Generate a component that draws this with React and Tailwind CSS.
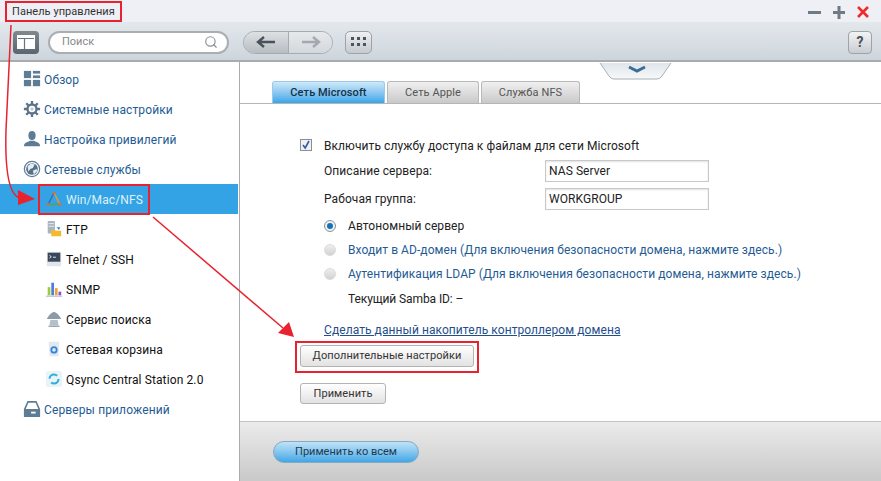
import React from "react";
import { Search } from "lucide-react";

const ic = "w-[18px] h-[18px] shrink-0";

const IconOverview = () => (
  <svg className={ic} viewBox="0 0 20 20"><g fill="#5f7c95"><rect x="1" y="1" width="8" height="8" /><rect x="11" y="1" width="8" height="3" /><rect x="11" y="6" width="8" height="3" /><rect x="1" y="11" width="8" height="7" /><rect x="11" y="11" width="8" height="7" /></g></svg>
);
const IconGear = () => (
  <svg className={ic} viewBox="0 0 20 20"><circle cx="10" cy="10" r="5" fill="none" stroke="#5d7388" strokeWidth="2.600" /><circle cx="10" cy="10" r="2" fill="#c3ccd4" /><g stroke="#5d7388" strokeWidth="2.600"><path d="M10 1v3.500M10 15.500V19M1 10h3.500M15.500 10H19M3.600 3.600l2.500 2.500M13.900 13.900l2.500 2.500M16.400 3.600l-2.500 2.500M6.100 13.900l-2.500 2.500" /></g></svg>
);
const IconUser = () => (
  <svg className={ic} viewBox="0 0 20 20"><ellipse cx="10" cy="6" rx="4" ry="5" fill="#5f7c95" /><path d="M1 18c0-3 2-4 7-6h4c5 2 7 3 7 6z" fill="#5f7c95" /></svg>
);
const IconGlobe = () => (
  <svg className={ic} viewBox="0 0 20 20"><circle cx="10" cy="10" r="8.500" fill="#fff" stroke="#5f7c95" strokeWidth="1.400" /><circle cx="10" cy="10" r="6.500" fill="#54708a" /><path d="M5 7l4-3 4 1-2 4-3 1-2 3zM11 12l4-2 1 2-4 4z" fill="#e6ebef" /></svg>
);
const IconTray = () => (
  <svg className={ic} viewBox="0 0 20 20"><path d="M5 1h10l4 9v9H1v-9z" fill="#5f7c95" /><path d="M6 3h8l3 7H3z" fill="#fff" /><rect x="9" y="13" width="5" height="2" fill="#fff" /></svg>
);
const IconTriangle = () => (
  <svg className={ic} viewBox="0 0 20 20" fill="none" strokeWidth="1.600"><path d="M10 3L3.500 16" stroke="#2f6fc4" /><path d="M10 3l6.500 13" stroke="#e59a2f" /><path d="M3.500 16h13" stroke="#5aa63c" /><circle cx="10" cy="3.500" r="1.500" fill="#e8662f" /><circle cx="3.500" cy="16" r="1.500" fill="#e8662f" /><circle cx="16.500" cy="16" r="1.500" fill="#e8662f" /></svg>
);
const IconFtp = () => (
  <svg className={ic} viewBox="0 0 20 20"><rect x="3" y="1" width="8" height="14" rx="1" fill="#a9b4bf" /><path d="M4 4h6M4 7h6" stroke="#e9edf0" /><path d="M7 11h4l1 1h6v6H7z" fill="#f4b92c" /><path d="M13 8h4l-1.500 3z" fill="#2f7fd0" /></svg>
);
const IconTerm = () => (
  <svg className={ic} viewBox="0 0 20 20"><rect x="2" y="2" width="16" height="16" rx="1" fill="#e0e5e9" /><rect x="3" y="3" width="14" height="10" fill="#39475a" /><path d="M5 6l2 1.500-2 1.500M9 8h3" stroke="#fff" fill="none" /></svg>
);
const IconBars = () => (
  <svg className={ic} viewBox="0 0 20 20"><rect x="3" y="8" width="3" height="9" fill="#9ccc3c" /><rect x="7" y="3" width="3" height="14" fill="#4a7fe0" /><rect x="11" y="9" width="3" height="8" fill="#eda13a" /><rect x="15" y="13" width="3" height="4" fill="#8a4fd0" /><path d="M1 18h18" stroke="#aab" /></svg>
);
const IconDish = () => (
  <svg className={ic} viewBox="0 0 20 20"><path d="M2 10c2-4 5-7 8-8 3 1 6 4 8 8z" fill="#8b9ba8" /><path d="M6 11h8l1 6H5z" fill="#b4c0c9" /><path d="M4 18h12" stroke="#8b9ba8" strokeWidth="1.500" /></svg>
);
const IconBin = () => (
  <svg className={ic} viewBox="0 0 20 20"><path d="M4 2h12l-1 16H5z" fill="#e4e8ec" /><circle cx="10" cy="11" r="3" fill="none" stroke="#2f86e0" strokeWidth="2" /></svg>
);
const IconSync = () => (
  <svg className={ic} viewBox="0 0 20 20"><rect x="1" y="1" width="18" height="18" rx="3" fill="#eaf3f8" /><circle cx="10" cy="10" r="5" fill="none" stroke="#2fb0d8" strokeWidth="2.400" strokeDasharray="11 4.700" /></svg>
);

const top = "text-[#1f5c94]";

function Row({ icon, label, sub, active }) {
  return (
    <div className={`h-[30px] flex items-center ${sub ? "pl-[45px]" : "pl-[23px]"} gap-[3px] ${active ? "bg-[#33a3e5] text-[#dff1fb] w-[238px]" : sub ? "text-[#111]" : top}`}>
      {icon}
      <span className="pt-[2px]">{label}</span>
    </div>
  );
}

const btn = "flex items-center justify-center pt-[1px] border border-[#b3b3b3] rounded-[3px] bg-gradient-to-b from-[#ffffff] to-[#e2e2e2] text-[#333] text-[11px]";
const tab = "h-[22px] pt-[2px] rounded-t-[3px] border border-b-0 flex items-center justify-center";

function Radio({ on, children, cls }) {
  return (
    <div className="flex items-center gap-[12px] h-[24px]">
      <span className={`w-[12px] h-[12px] rounded-full flex items-center justify-center border ${on ? "border-[#8a939c] bg-[#f0f0f0]" : "border-[#dcdcdc] bg-gradient-to-b from-[#eeeeee] to-[#d2d2d2]"}`}>
        {on && <span className="w-[6px] h-[6px] rounded-full bg-[#1572b8]" />}
      </span>
      <span className={cls}>{children}</span>
    </div>
  );
}

export default function App() {
  return (
    <div className="relative w-[881px] h-[481px] overflow-hidden bg-white flex flex-col text-[12px]" style={{ fontFamily: "Roboto, sans-serif" }}>
      {/* title bar */}
      <div className="h-[22px] shrink-0 bg-[#eef0f6] flex items-center justify-between pl-[12px] pr-[12px] pt-[2px] text-[#333]">
        <span className="text-[11px] tracking-[0.05px]">Панель управления</span>
        <div className="flex items-center gap-[12px]">
          <svg width="13" height="13" viewBox="0 0 13 13"><rect x="0" y="5" width="13" height="3" fill="#6f7a85" /></svg>
          <svg width="12" height="13" viewBox="0 0 12 13"><path d="M0 5h12v3H0zM4.500 0h3v13h-3z" fill="#6f7a85" /></svg>
          <svg width="12" height="12" viewBox="0 0 12 12"><path d="M1 1l10 10M11 1L1 11" stroke="#ef2b2b" strokeWidth="2.600" /></svg>
        </div>
      </div>
      {/* toolbar */}
      <div className="h-[40px] shrink-0 bg-gradient-to-b from-[#e3e8ec] to-[#cdd5dc] border-b-[2px] border-[#a9acae] flex items-center pl-[13px] pr-[9px] pt-[2px]">
        <div className="w-[26px] h-[23px] rounded-[4px] bg-gradient-to-b from-[#80898f] to-[#5a6570] flex items-center justify-center">
          <svg width="18" height="14" viewBox="0 0 18 14"><path d="M0 0h18v14H0z" fill="#fff" /><path d="M1 3.500h16M7.500 4v10" stroke="#6a747d" strokeWidth="1.200" /></svg>
        </div>
        <div className="ml-[9px] w-[181px] h-[23px] rounded-full bg-white border-[2px] border-[#a9aeb3] flex items-center justify-between pl-[12px] pr-[9px] text-[#888] text-[11px]">
          <span>Поиск</span>
          <Search size={14} color="#8a9096" strokeWidth={2} />
        </div>
        <div className="ml-[14px] w-[90px] h-[23px] rounded-full border border-[#a5abb0] flex overflow-hidden">
          <div className="w-[45px] bg-gradient-to-b from-[#dde1e4] to-[#b8bdc2] border-r border-[#a5abb0] flex items-center justify-center">
            <svg width="20" height="12" viewBox="0 0 20 12"><path d="M19 6H3M8 1L2 6l6 5" fill="none" stroke="#4a525a" strokeWidth="2.400" /></svg>
          </div>
          <div className="flex-1 bg-gradient-to-b from-[#e6e9ec] to-[#d3d8dc] flex items-center justify-center">
            <svg width="20" height="12" viewBox="0 0 20 12"><path d="M1 6h16M12 1l6 5-6 5" fill="none" stroke="#a3a9ae" strokeWidth="2.400" /></svg>
          </div>
        </div>
        <div className="ml-[12px] w-[27px] h-[23px] rounded-[5px] border border-[#9da3a9] bg-gradient-to-b from-[#eef0f2] to-[#c5cacf] flex items-center justify-center">
          <svg width="15" height="10" viewBox="0 0 15 10"><g fill="#4c555d"><rect x="0" y="0" width="3" height="3" /><rect x="6" y="0" width="3" height="3" /><rect x="12" y="0" width="3" height="3" /><rect x="0" y="6" width="3" height="3" /><rect x="6" y="6" width="3" height="3" /><rect x="12" y="6" width="3" height="3" /></g></svg>
        </div>
        <div className="ml-auto w-[24px] h-[23px] rounded-[4px] border border-[#9da3a9] bg-gradient-to-b from-[#f2f3f5] to-[#c9cdd2] flex items-center justify-center text-[#4a5158] font-bold text-[14px]">?</div>
      </div>

      <div className="flex-1 flex min-h-0">
        {/* sidebar */}
        <div className="w-[240px] shrink-0 border-r border-[#a8adb1] pt-[2px] text-[12px] tracking-[0.12px]">
          <Row icon={<IconOverview />} label="Обзор" />
          <Row icon={<IconGear />} label="Системные настройки" />
          <Row icon={<IconUser />} label="Настройка привилегий" />
          <Row icon={<IconGlobe />} label="Сетевые службы" />
          <Row sub active icon={<IconTriangle />} label="Win/Mac/NFS" />
          <Row sub icon={<IconFtp />} label="FTP" />
          <Row sub icon={<IconTerm />} label="Telnet / SSH" />
          <Row sub icon={<IconBars />} label="SNMP" />
          <Row sub icon={<IconDish />} label="Сервис поиска" />
          <Row sub icon={<IconBin />} label="Сетевая корзина" />
          <Row sub icon={<IconSync />} label="Qsync Central Station 2.0" />
          <Row icon={<IconTray />} label="Серверы приложений" />
        </div>

        {/* main */}
        <div className="flex-1 flex flex-col min-w-0">
          <div className="flex-1 flex flex-col">
            <div className="mt-[19px] h-[23px] border-b border-[#b5b5b5] pl-[32px] flex gap-[2px] items-end text-[11px] tracking-[0.1px]">
              <div className={`${tab} w-[113px] border-[#9cc9e8] bg-gradient-to-b from-[#cfe9f9] to-[#35a5e8] font-medium text-[#143247]`}>Сеть Microsoft</div>
              <div className={`${tab} w-[92px] border-[#b9b9b9] bg-gradient-to-b from-[#f0f0f0] to-[#c9c9c9] text-[#555]`}>Сеть Apple</div>
              <div className={`${tab} w-[99px] border-[#b9b9b9] bg-gradient-to-b from-[#f0f0f0] to-[#c9c9c9] text-[#555]`}>Служба NFS</div>
            </div>

            <div className="pl-[60px] pt-[32px] text-[#222] tracking-[0.07px]">
              <div className="flex items-center gap-[12px] h-[18px]">
                <span className="w-[12px] h-[12px] border border-[#8a8f94] bg-[#eef0f2] flex items-center justify-center">
                  <svg width="10" height="10" viewBox="0 0 10 10"><path d="M2 5l2.200 3L8 1" fill="none" stroke="#3c55a8" strokeWidth="1.600" /></svg>
                </span>
                <span className="pt-[1px]">Включить службу доступа к файлам для сети Microsoft</span>
              </div>
              <div className="mt-[6px] pl-[24px] flex items-center h-[22px]">
                <span className="w-[221px]">Описание сервера:</span>
                <div className="w-[164px] h-[22px] border border-[#c8c8c8] shadow-[inset_0_1px_2px_#e0e0e0] pl-[3px] flex items-center text-[#222]">NAS Server</div>
              </div>
              <div className="mt-[6px] pl-[24px] flex items-center h-[22px]">
                <span className="w-[221px]">Рабочая группа:</span>
                <div className="w-[164px] h-[22px] border border-[#c8c8c8] shadow-[inset_0_1px_2px_#e0e0e0] pl-[3px] flex items-center text-[#222]">WORKGROUP</div>
              </div>
              <div className="mt-[4px] pl-[24px]">
                <Radio on>Автономный сервер</Radio>
                <Radio cls="text-[#1f5c94]">Входит в AD-домен (Для включения безопасности домена, нажмите здесь.)</Radio>
                <Radio cls="text-[#1f5c94]">Аутентификация LDAP (Для включения безопасности домена, нажмите здесь.)</Radio>
              </div>
              <div className="pl-[48px] pt-[2px] h-[24px] flex items-center tracking-[-0.1px]">Текущий Samba ID: –</div>
              <div className="mt-[7px] pl-[24px] pt-[2px] text-[#1f4f8c] underline h-[24px] flex items-center">Сделать данный накопитель контроллером домена</div>
              <div className={`${btn} mt-[4px] w-[174px] h-[22px]`}>Дополнительные настройки</div>
              <div className={`${btn} mt-[16px] w-[86px] h-[21px]`}>Применить</div>
            </div>
          </div>

          <div className="h-[60px] shrink-0 border-t border-[#c4c4c4] bg-gradient-to-b from-[#ebebeb] to-[#c9c9c9] pl-[33px] pt-[19px]">
            <div className="w-[146px] h-[22px] pt-[1px] rounded-full border border-[#86a9c4] bg-gradient-to-b from-[#bfe3f7] to-[#3ea7e6] flex items-center justify-center text-[#1d3a50] text-[11px]">Применить ко всем</div>
          </div>
        </div>
      </div>

      {/* pull tab */}
      <svg className="absolute left-[598px] top-[62px]" width="76" height="18" viewBox="0 0 76 18">
        <defs><linearGradient id="pull" x1="0" y1="0" x2="0" y2="1"><stop offset="0" stopColor="#dfe5ea" /><stop offset="1" stopColor="#f7f9fa" /></linearGradient></defs>
        <path d="M2 1l9 13q2 3 5 3h43q3 0 5-3l9-13z" fill="url(#pull)" />
        <path d="M2 1l9 13q2 3 5 3h43q3 0 5-3l9-13" fill="none" stroke="#a9b0b6" />
        <path d="M31 5l8 4 8-4" fill="none" stroke="#3e6d94" strokeWidth="3" />
      </svg>

      {/* annotations */}
      <div className="absolute left-[5px] top-[1px] w-[117px] h-[21px] border-[2px] border-[#e8222e]" />
      <div className="absolute left-[38px] top-[184px] w-[112px] h-[31px] border-[2px] border-[#e8222e]" />
      <div className="absolute left-[295px] top-[341px] w-[184px] h-[32px] border-[2px] border-[#e8222e]" />
      <svg className="absolute left-0 top-0 pointer-events-none" width="881" height="481" viewBox="0 0 881 481">
        <path d="M11 25L6 130C5 165 8 195 20 198" fill="none" stroke="#e8222e" strokeWidth="1.500" />
        <path d="M18 190L35 199L18 205z" fill="#e8222e" />
        <path d="M153 217L283 328" fill="none" stroke="#e8222e" strokeWidth="1.500" />
        <path d="M294 337L278 333L289 322z" fill="#e8222e" />
      </svg>
    </div>
  );
}
